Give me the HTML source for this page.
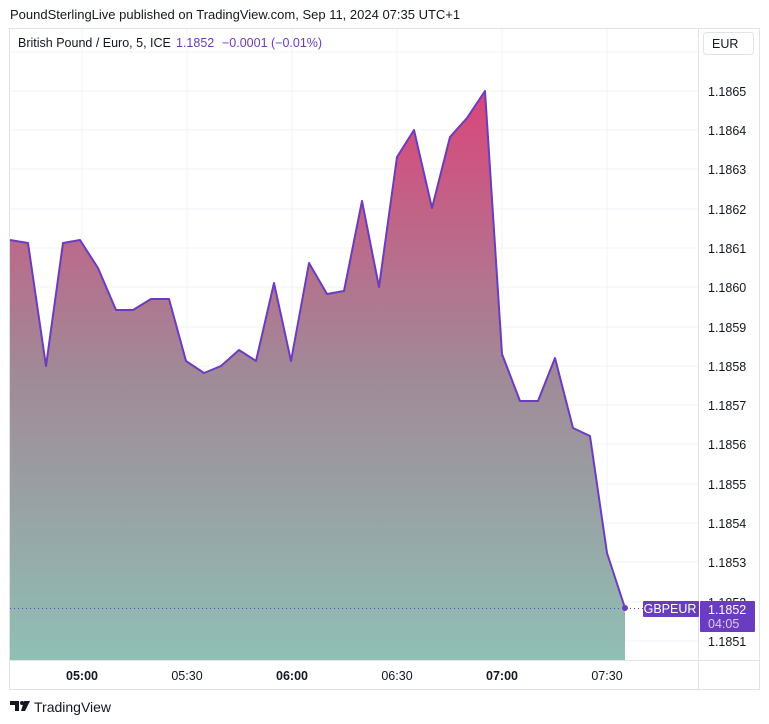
<!DOCTYPE html>
<html><head><meta charset="utf-8"><style>
body{margin:0;width:769px;height:724px;background:#fff;font-family:"Liberation Sans",sans-serif;overflow:hidden;position:relative}
.t{position:absolute;white-space:nowrap}
</style></head><body>
<div class="t" style="left:10px;top:7px;font-size:13px;color:#131722">PoundSterlingLive published on TradingView.com, Sep 11, 2024 07:35 UTC+1</div>
<svg width="769" height="724" style="position:absolute;left:0;top:0" font-family="Liberation Sans, sans-serif">
<defs><linearGradient id="g" x1="0" y1="91" x2="0" y2="661" gradientUnits="userSpaceOnUse">
<stop offset="0" stop-color="#d9467a"/><stop offset="0.5" stop-color="#a08a98"/><stop offset="1" stop-color="#8fbfb5"/></linearGradient></defs>
<rect x="9.5" y="28.5" width="750" height="661" fill="none" stroke="#e0e3eb"/>
<line x1="698.5" y1="28" x2="698.5" y2="689" stroke="#e0e3eb"/>
<line x1="9" y1="660.5" x2="760" y2="660.5" stroke="#e0e3eb"/>
<g stroke="#f0f3fa">
<line x1="10" x2="698" y1="52" y2="52"/><line x1="10" x2="698" y1="91" y2="91"/><line x1="10" x2="698" y1="130" y2="130"/><line x1="10" x2="698" y1="169" y2="169"/><line x1="10" x2="698" y1="209" y2="209"/><line x1="10" x2="698" y1="248" y2="248"/><line x1="10" x2="698" y1="287" y2="287"/><line x1="10" x2="698" y1="327" y2="327"/><line x1="10" x2="698" y1="366" y2="366"/><line x1="10" x2="698" y1="405" y2="405"/><line x1="10" x2="698" y1="444" y2="444"/><line x1="10" x2="698" y1="484" y2="484"/><line x1="10" x2="698" y1="523" y2="523"/><line x1="10" x2="698" y1="562" y2="562"/><line x1="10" x2="698" y1="602" y2="602"/><line x1="10" x2="698" y1="641" y2="641"/>
<line x1="82" x2="82" y1="29" y2="660"/><line x1="187" x2="187" y1="29" y2="660"/><line x1="292" x2="292" y1="29" y2="660"/><line x1="397" x2="397" y1="29" y2="660"/><line x1="502" x2="502" y1="29" y2="660"/><line x1="607" x2="607" y1="29" y2="660"/>
</g>
<path d="M10,240 L28,243 46,366 63,243 80,240 98,268 116,310 133,310 151,299 169,299 186,361 204,373 221,366 239,350 256,361 274,283 291,361 309,263 327,294 344,291 362,201 379,287 397,157 414,130 432,208 450,137 467,118 485,91 502,354 520,401 538,401 555,358 573,428 590,436 607,553 625,608 L625,660 L10,660 Z" fill="url(#g)"/>
<path d="M10,240 L28,243 46,366 63,243 80,240 98,268 116,310 133,310 151,299 169,299 186,361 204,373 221,366 239,350 256,361 274,283 291,361 309,263 327,294 344,291 362,201 379,287 397,157 414,130 432,208 450,137 467,118 485,91 502,354 520,401 538,401 555,358 573,428 590,436 607,553 625,608" fill="none" stroke="#6a3cc0" stroke-width="2" stroke-linejoin="round"/>
<line x1="10" x2="698" y1="608.5" y2="608.5" stroke="#6a3cc0" stroke-dasharray="1,3"/>
<circle cx="625" cy="608" r="3" fill="#6a3cc0"/>
<g font-size="12.5" fill="#131722">
<text x="708" y="96">1.1865</text><text x="708" y="135">1.1864</text><text x="708" y="174">1.1863</text><text x="708" y="214">1.1862</text><text x="708" y="253">1.1861</text><text x="708" y="292">1.1860</text><text x="708" y="332">1.1859</text><text x="708" y="371">1.1858</text><text x="708" y="410">1.1857</text><text x="708" y="449">1.1856</text><text x="708" y="489">1.1855</text><text x="708" y="528">1.1854</text><text x="708" y="567">1.1853</text><text x="708" y="607">1.1852</text><text x="708" y="646">1.1851</text>
<text x="82" y="680" text-anchor="middle" font-weight="bold">05:00</text><text x="187" y="680" text-anchor="middle">05:30</text><text x="292" y="680" text-anchor="middle" font-weight="bold">06:00</text><text x="397" y="680" text-anchor="middle">06:30</text><text x="502" y="680" text-anchor="middle" font-weight="bold">07:00</text><text x="607" y="680" text-anchor="middle">07:30</text>
</g>
<rect x="643" y="601" width="56" height="16" rx="1" fill="#6a3cc0"/>
<text x="670" y="613" font-size="12.5" fill="#fff" text-anchor="middle">GBPEUR</text>
<rect x="700" y="601" width="55" height="31" rx="1" fill="#6a3cc0"/>
<text x="708" y="614" font-size="12.5" fill="#fff">1.1852</text>
<text x="708" y="628" font-size="12.5" fill="#d8cdf0">04:05</text>
<rect x="703.5" y="32.5" width="50" height="22" rx="3" fill="#fff" stroke="#e0e3eb"/>
<text x="712" y="48" font-size="12.5" fill="#131722">EUR</text>
<text x="18" y="47" font-size="12.5" fill="#131722">British Pound / Euro, 5, ICE</text>
<text x="176" y="47" font-size="12.5" fill="#6a3cc0">1.1852</text>
<text x="222" y="47" font-size="12.5" fill="#6a3cc0">−0.0001 (−0.01%)</text>
<path d="M10,701 h9 v10 h-4 v-6 h-5 z M24,701 h6 l-5,10 h-4 z" fill="#131722"/>
<circle cx="22" cy="703" r="2" fill="#131722"/>
<text x="34" y="712" font-size="14" fill="#131722">TradingView</text>
</svg>
</body></html>
